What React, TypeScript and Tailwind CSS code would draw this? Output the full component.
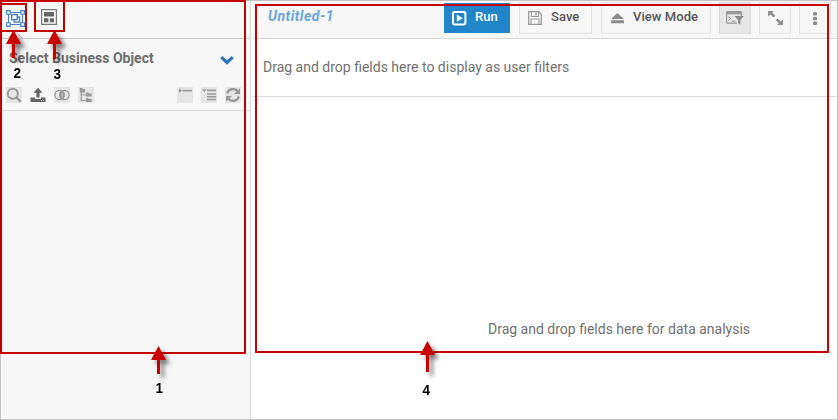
import React from "react";

function GroupIcon() {
  return (
    <svg width="19" height="17" viewBox="0 0 19 17" fill="none" stroke="#3f7fc0" className="block">
      <path d="M3 2.5h13M3 14.5h13M2.5 3v11M16.5 3v11" strokeWidth="1" />
      <path d="M.6.6h3.6v3.6H.6zM14.8.6h3.6v3.6h-3.6zM.6 12.8h3.6v3.6H.6zM14.8 12.8h3.6v3.6h-3.6z" fill="#fff" strokeWidth="1.1" />
      <path d="M5.6 4.6h5.6v5H5.6zM11.2 7h2.4v5.2H8.2V9.6" strokeWidth="1.3" />
    </svg>
  );
}

function TemplateIcon() {
  return (
    <svg width="16" height="16" viewBox="0 0 16 16" className="block">
      <path d="M.6.6h14.8v14.8H.6z" fill="#fafafa" stroke="#777" strokeWidth="1.2" />
      <path d="M3 3h10v4.4H3zM3 9.3h4.4v3.9H3zM8.8 9.3H13v3.9H8.8z" fill="#666" />
    </svg>
  );
}

function SearchIcon() {
  return (
    <svg width="16" height="16" viewBox="0 0 16 16" fill="none" stroke="#999" className="block">
      <circle cx="6.8" cy="6.8" r="5" strokeWidth="2" />
      <path d="M10.5 10.5l4.2 4.2" strokeWidth="2.4" />
    </svg>
  );
}

function UploadIcon() {
  return (
    <svg width="16" height="16" viewBox="0 0 16 16" fill="#666" className="block">
      <path d="M8 .8l4.6 4.9H9.6v4.8H6.4V5.7h-3z" />
      <path d="M.5 10.5h4.7v1.4h5.6v-1.4h4.7V15H.5z" />
      <path d="M11 13h1v1h-1zM13 13h1v1h-1z" fill="#ccc" />
    </svg>
  );
}

function VennIcon() {
  return (
    <svg width="16" height="16" viewBox="0 0 16 16" fill="none" stroke="#999" strokeWidth="1.3" className="block">
      <path d="M8 4a5 5 0 010 8 5 5 0 010-8z" fill="#b0b0b0" />
      <circle cx="5.6" cy="8" r="4.7" />
      <circle cx="10.4" cy="8" r="4.7" />
    </svg>
  );
}

function TreeIcon() {
  return (
    <svg width="16" height="16" viewBox="0 0 16 16" fill="#999" className="block">
      <path d="M1.8 1h2.4l.8 1h2v3.4H1.8zM8 5.6h2.2l.8 1h2.6v3H8zM8 11h2.2l.8 1h2.6v3H8z" />
      <path d="M3.2 5v8.5H8M3.2 8H8" fill="none" stroke="#999" strokeWidth="1.2" />
    </svg>
  );
}

function CollapseIcon() {
  return (
    <svg width="16" height="16" viewBox="0 0 16 16" fill="#999" className="block">
      <path d="M2 1.2l3 2.4L2 6zM5.5 2.8H15v1.6H5.5z" />
    </svg>
  );
}

function ExpandListIcon() {
  return (
    <svg width="16" height="16" viewBox="0 0 16 16" fill="#999" className="block">
      <path d="M1 2.3h4.6L3.3 5zM6 2.6h9v1.6H6zM6 6.3h9v1.4H6zM6 9h9v1.4H6zM6 11.8h9v1.5H6z" />
    </svg>
  );
}

function RefreshIcon() {
  return (
    <svg width="16" height="16" viewBox="0 0 16 16" fill="none" stroke="#999" strokeWidth="2.4" className="block">
      <path d="M2.2 6.5C3.6 1.6 9.6.9 12.8 4.2M13.8 9.5C12.4 14.4 6.4 15.1 3.2 11.8" />
      <path d="M15 1.2V7H9.2zM1 14.8V9h5.8z" fill="#999" stroke="none" />
    </svg>
  );
}

function RunIcon() {
  return (
    <svg width="15" height="15" viewBox="0 0 15 15" className="block">
      <rect x="1" y="1" width="12.4" height="12.4" rx="1.6" fill="none" stroke="#fff" strokeWidth="2" />
      <path d="M4.8 3.6L10.8 7.2l-6 3.6z" fill="#fff" />
    </svg>
  );
}

function SaveIcon() {
  return (
    <svg width="14" height="14" viewBox="0 0 14 14" fill="none" stroke="#999" className="block">
      <path d="M.7.7h10l2.6 2.6v10H.7z" strokeWidth="1.3" />
      <path d="M3.5 1v4.5h7V1M3 13V8h8v5" strokeWidth="1.1" />
      <path d="M8 1.5v2.8" strokeWidth="1.6" />
    </svg>
  );
}

function EjectIcon() {
  return (
    <svg width="13" height="11" viewBox="0 0 13 11" fill="#8d8d8d" className="block">
      <path d="M6.5 0L13 6H0zM0 7.2h13v3H0z" />
    </svg>
  );
}

function ConsoleFilterIcon() {
  return (
    <svg width="18" height="14" viewBox="0 0 18 14" fill="none" stroke="#999" className="block">
      <path d="M11 12.2H1.4Q.6 12.2.6 11.4V1.4Q.6.6 1.4.6h13.2q.8 0 .8.8V5" strokeWidth="1.2" />
      <path d="M1 1h14v2.3H1z" fill="#999" stroke="none" />
      <path d="M2.3 5.5l2.3 2-2.3 2M5.5 10.2h4" strokeWidth="1" />
      <path d="M8.5 5h9.3l-3.4 4v4.8L12 12V9z" fill="#8d8d8d" stroke="none" />
    </svg>
  );
}

function ResizeIcon() {
  return (
    <svg width="15" height="14" viewBox="0 0 15 14" fill="#8d8d8d" className="block">
      <path d="M0 0h6L4.2 1.8l3 2.9-1.7 1.7-3.1-3L.2 5.5zM15 14H9l1.8-1.8-3-2.9 1.7-1.7 3.1 3 2.2-2.1z" />
    </svg>
  );
}

function KebabIcon() {
  return (
    <svg width="4" height="13" viewBox="0 0 4 13" fill="#8d8d8d" className="block">
      <rect width="4" height="3.6" rx="1" />
      <rect y="4.7" width="4" height="3.6" rx="1" />
      <rect y="9.4" width="4" height="3.6" rx="1" />
    </svg>
  );
}

function Arrow({ className, height }: { className: string; height: number }) {
  return (
    <svg className={`absolute overflow-visible ${className}`} width="15" height={height} viewBox={`0 0 15 ${height}`}>
      <path
        d={`M7.5 0L15 14H9v${height - 14}H6V14H0z`}
        fill="#c80000"
        className="drop-shadow-[4px_4px_2px_rgba(0,0,0,0.5)]"
      />
    </svg>
  );
}

function Callout({ className, children }: { className: string; children: React.ReactNode }) {
  return (
    <span className={`absolute scale-x-90 text-[15px] leading-4 font-bold text-black font-['Liberation_Sans',Arial,sans-serif] ${className}`}>
      {children}
    </span>
  );
}

export default function App() {
  return (
    <div className="relative flex h-[420px] w-[838px] border border-[#c4c4c4] bg-white font-[Roboto,sans-serif] text-[#707070]">
      <aside className="flex w-[250px] shrink-0 flex-col border-r border-[#d9d9d9] bg-[#f7f7f7]">
        <div className="flex h-[38px] shrink-0 items-start border-b border-[#c8c8c8] pt-[9px] pl-[5px]">
          <GroupIcon />
          <div className="-mt-px ml-4">
            <TemplateIcon />
          </div>
        </div>
        <div className="flex h-[72px] shrink-0 flex-col border-b border-[#d9d9d9]">
          <div className="flex h-[38px] items-center justify-between pr-4 pl-2">
            <h2 className="text-[14px] leading-5 font-bold whitespace-nowrap text-[#6b6b6b]">Select Business Object</h2>
            <svg width="14" height="9" viewBox="0 0 14 9" fill="none" stroke="#2f74b5" strokeWidth="3.2" className="mt-[5px] block">
              <path d="M1.3 1.2L7 6.5l5.7-5.3" />
            </svg>
          </div>
          <div className="flex items-center pt-[10px] pl-[5px]">
            <div className="flex gap-2">
              <div className="bg-[#e6e6e6]"><SearchIcon /></div>
              <div><UploadIcon /></div>
              <div className="bg-[#e6e6e6]"><VennIcon /></div>
              <div className="bg-[#e6e6e6]"><TreeIcon /></div>
            </div>
            <div className="ml-[83px] flex gap-2">
              <div className="bg-[#e6e6e6]"><CollapseIcon /></div>
              <div className="bg-[#e6e6e6]"><ExpandListIcon /></div>
              <div className="bg-[#e6e6e6]"><RefreshIcon /></div>
            </div>
          </div>
        </div>
      </aside>

      <main className="flex min-w-0 flex-1 flex-col pl-0.5">
        <header className="flex h-[38px] shrink-0 items-start border-b border-[#d9d9d9] bg-[#f7f7f7] pt-px pr-1.5 pl-[15px]">
          <h1 className="mt-1 flex-1 text-[14px] leading-5 font-bold tracking-[0.5px] text-[#68a5db] italic">Untitled-1</h1>
          <div className="flex gap-2 text-[13px] leading-5 font-medium tracking-[0.05px] whitespace-nowrap text-[#555]">
            <button className="mt-px mr-px flex h-[30px] w-[66px] items-center bg-[#2185c9] pl-2 text-white">
              <RunIcon />
              <span className="mb-0.5 ml-2">Run</span>
            </button>
            <button className="flex h-8 w-[73px] items-center border border-[#e3e3e3] pl-2">
              <SaveIcon />
              <span className="mb-0.5 ml-[9px]">Save</span>
            </button>
            <button className="ml-px flex h-8 w-[110px] items-center border border-[#e3e3e3] pl-[9px]">
              <EjectIcon />
              <span className="mb-0.5 ml-[9px]">View Mode</span>
            </button>
            <button className="flex h-8 w-8 items-center justify-center border border-[#dadada] bg-[#e7e7e7]"><ConsoleFilterIcon /></button>
            <button className="flex h-8 w-8 items-center justify-center border border-[#e3e3e3]"><ResizeIcon /></button>
            <button className="flex h-8 w-8 items-center justify-center border border-[#e3e3e3]"><KebabIcon /></button>
          </div>
        </header>
        <section className="flex h-[58px] shrink-0 items-center border-b border-[#d9d9d9] pl-[10px] text-[14px]">
          Drag and drop fields here to display as user filters
        </section>
        <section className="flex-1 pt-[222px] pl-[235px] text-[14px] leading-5">
          Drag and drop fields here for data analysis
        </section>
      </main>

      <svg className="absolute top-[30px] left-[5px]" width="18" height="8" viewBox="0 0 18 8">
        <path d="M0 7.5h1L9 .7l8 6.8h1" fill="#f7f7f7" stroke="#c8c8c8" />
      </svg>
      <div className="absolute -top-px -left-px h-[354px] w-[246px] border-2 border-[#c80000]" />
      <div className="absolute top-[2px] -left-px h-[29px] w-[27px] border-2 border-[#c80000]" />
      <div className="absolute -top-px left-[33px] h-[32px] w-[31px] border-2 border-[#c80000]" />
      <div className="absolute top-[3px] left-[254px] h-[349px] w-[574px] border-2 border-[#c80000]" />
      <Arrow className="top-[29px] left-[5px]" height={28} />
      <Arrow className="top-[29px] left-[46px]" height={29} />
      <Arrow className="top-[345px] left-[150px]" height={28} />
      <Arrow className="top-[340px] left-[419px]" height={31} />
      <Callout className="top-[64px] left-[12px]">2</Callout>
      <Callout className="top-[65px] left-[52px]">3</Callout>
      <Callout className="top-[379px] left-[154px]">1</Callout>
      <Callout className="top-[381px] left-[421px]">4</Callout>
    </div>
  );
}
